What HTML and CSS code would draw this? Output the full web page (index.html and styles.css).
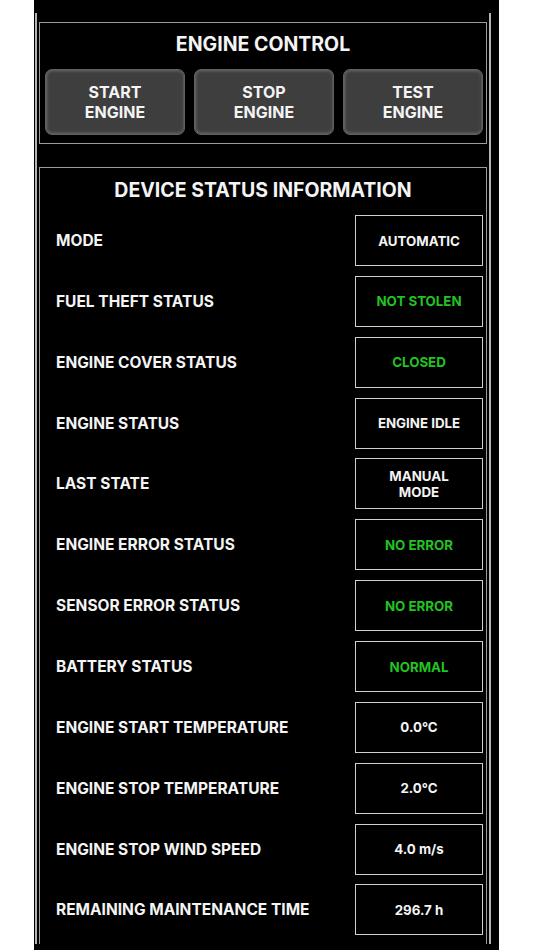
FILE: index.html
```html
<!DOCTYPE html>
<html>
<head>
<meta charset="utf-8">
<link rel="stylesheet" href="styles.css">
</head>
<body>
<div class="screen">
  <div class="frame">
    <section class="panel control">
      <h2 class="title">ENGINE CONTROL</h2>
      <div class="buttons">
        <div class="btn">START<br>ENGINE</div>
        <div class="btn">STOP<br>ENGINE</div>
        <div class="btn">TEST<br>ENGINE</div>
      </div>
    </section>
    <section class="panel status">
      <h2 class="title">DEVICE STATUS INFORMATION</h2>
      <div class="rows">
        <div class="row"><span class="label">MODE</span><span class="value">AUTOMATIC</span></div>
        <div class="row"><span class="label">FUEL THEFT STATUS</span><span class="value ok">NOT STOLEN</span></div>
        <div class="row"><span class="label">ENGINE COVER STATUS</span><span class="value ok">CLOSED</span></div>
        <div class="row"><span class="label">ENGINE STATUS</span><span class="value">ENGINE IDLE</span></div>
        <div class="row"><span class="label">LAST STATE</span><span class="value">MANUAL<br>MODE</span></div>
        <div class="row"><span class="label">ENGINE ERROR STATUS</span><span class="value ok">NO ERROR</span></div>
        <div class="row"><span class="label">SENSOR ERROR STATUS</span><span class="value ok">NO ERROR</span></div>
        <div class="row"><span class="label">BATTERY STATUS</span><span class="value ok">NORMAL</span></div>
        <div class="row"><span class="label">ENGINE START TEMPERATURE</span><span class="value">0.0°C</span></div>
        <div class="row"><span class="label">ENGINE STOP TEMPERATURE</span><span class="value">2.0°C</span></div>
        <div class="row"><span class="label">ENGINE STOP WIND SPEED</span><span class="value">4.0 m/s</span></div>
        <div class="row"><span class="label">REMAINING MAINTENANCE TIME</span><span class="value">296.7 h</span></div>
      </div>
    </section>
  </div>
</div>
</body>
</html>
```
FILE: styles.css
```css
* { box-sizing: border-box; }
html, body { margin: 0; padding: 0; background: #ffffff; }
body {
  font-family: Inter, "Open Sans", "Liberation Sans", sans-serif;
  color: #f4f4f4;
}
.screen {
  width: 465px;
  height: 950px;
  margin-left: 34px;
  background: #000;
  padding-top: 13px;
  overflow: hidden;
}
.frame {
  margin-left: 1px;
  width: 456px;
  height: 931px;
  border-left: 2px solid #b4b4b4;
  border-right: 2px solid #b4b4b4;
  padding: 9px 2px 0 2px;
  overflow: hidden;
}
.panel {
  border: 1px solid #9c9c9c;
}
.title {
  margin: 0;
  font-size: 19.5px;
  line-height: 24px;
  font-weight: 700;
  text-align: center;
}
.control {
  height: 122px;
  padding-top: 9px;
}
.buttons {
  margin-top: 13px;
  padding-left: 5px;
  display: flex;
  gap: 9px;
}
.btn {
  width: 140px;
  height: 66px;
  border-radius: 7px;
  background: #3e3e3e;
  border: 1px solid #606060;
  box-shadow: inset 0 0 3px 1px #6c6c6c, inset -2px 0 1px #2a2a2a;
  display: flex;
  align-items: center;
  justify-content: center;
  text-align: center;
  font-size: 16px;
  line-height: 20px;
  font-weight: 700;
  color: #f4f4f4;
}
.status {
  margin-top: 23px;
  padding-top: 10px;
  height: 800px;
}
.rows {
  margin-top: 13px;
  padding: 0 3px 0 16px;
  display: flex;
  flex-direction: column;
  gap: 9.87px;
}
.row {
  height: 51px;
  display: flex;
  align-items: center;
  justify-content: space-between;
}
.label {
  font-size: 15.5px;
  font-weight: 700;
  color: #f4f4f4;
}
.value {
  width: 128px;
  height: 51px;
  border: 1.5px solid #cfcfcf;
  display: flex;
  align-items: center;
  justify-content: center;
  text-align: center;
  font-size: 13.3px;
  line-height: 16px;
  font-weight: 700;
  color: #f4f4f4;
}
.value.ok { color: #22c322; }
```
